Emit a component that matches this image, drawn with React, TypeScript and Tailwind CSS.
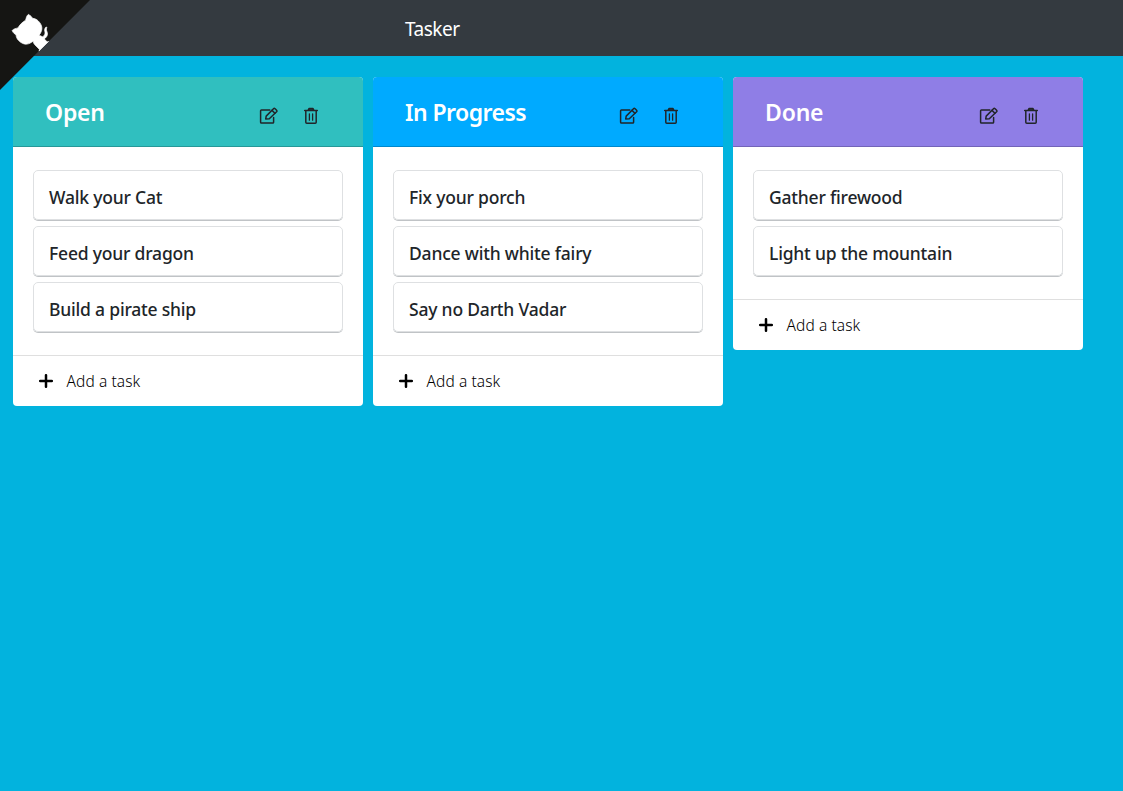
import React from "react";

type Column = { title: string; color: string; tracking: string; tasks: string[] };

const columns: Column[] = [
  { title: "Open", color: "bg-[#30bfbf]", tracking: "tracking-[-0.2px]", tasks: ["Walk your Cat", "Feed your dragon", "Build a pirate ship"] },
  { title: "In Progress", color: "bg-[#00aaff]", tracking: "tracking-[-0.55px]", tasks: ["Fix your porch", "Dance with white fairy", "Say no Darth Vadar"] },
  { title: "Done", color: "bg-[#8f7ee6]", tracking: "tracking-[-0.2px]", tasks: ["Gather firewood", "Light up the mountain"] },
];

function EditIcon() {
  return (
    <svg width="20" height="18" viewBox="0 0 20 18" fill="none" stroke="#212529" strokeWidth="1.5" strokeLinejoin="round" strokeLinecap="round">
      <path d="M10.8 3H2.4Q1.6 3 1.6 3.8V15.2Q1.6 16 2.4 16H13.8Q14.6 16 14.6 15.2V10.4" />
      <path d="M6.7 12L7.2 9.1L14.5 1.8Q15.3 1 16.1 1.8L17.6 3.3Q18.3 4.1 17.6 4.8L10.3 11.7L6.7 12Z" />
      <path d="M13 3.4L15.9 6.3" />
    </svg>
  );
}

function TrashIcon() {
  return (
    <svg width="16" height="18" viewBox="0 0 16 18" fill="none" stroke="#212529" strokeWidth="1.5" strokeLinejoin="round" strokeLinecap="round">
      <path d="M1.7 3.6H14.3M2.8 4V15.2Q2.8 16.2 3.8 16.2H12.2Q13.2 16.2 13.2 15.2V4" />
      <path d="M5.2 3.3L6 1.6H10L10.8 3.3Z" fill="#212529" fillOpacity="0.5" />
      <path d="M6.4 6.8V13.2M9.6 6.8V13.2" strokeWidth="1.3" />
    </svg>
  );
}

function GithubCorner() {
  return (
    <svg className="absolute left-0 top-0 -scale-x-100" width="90" height="90" viewBox="0 0 250 250">
      <path fill="#151513" d="M0,0 L115,115 L130,115 L142,142 L250,250 L250,0 Z" />
      <g fill="#fff" stroke="#fff" strokeWidth="2" strokeLinejoin="round">
        <path d="M128.3,109.0 C113.8,99.7 119.0,89.6 119.0,89.6 C122.0,82.7 120.5,78.6 120.5,78.6 C119.2,72.0 123.4,76.3 123.4,76.3 C127.3,80.9 125.5,87.3 125.5,87.3 C122.9,97.6 130.6,101.9 134.4,103.2" />
        <path d="M115.0,115.0 C114.9,115.1 118.7,116.5 119.8,115.4 L133.7,101.6 C136.9,99.2 139.9,98.4 142.2,98.6 C133.8,88.0 127.5,74.4 143.8,58.0 C148.5,53.4 154.0,51.2 159.7,51.0 C160.3,49.4 163.2,43.6 171.4,40.1 C171.4,40.1 176.1,42.5 178.8,56.2 C183.1,58.6 187.2,61.8 190.9,65.4 C194.5,69.0 197.7,73.2 200.1,77.6 C213.8,80.2 216.3,84.9 216.3,84.9 C212.7,93.1 206.9,96.0 205.4,96.6 C205.1,102.4 203.0,107.8 198.3,112.5 C181.9,128.9 168.3,122.5 157.7,114.1 C157.9,116.9 156.7,120.9 152.7,124.9 L141.0,136.5 C139.8,137.7 141.6,141.9 141.8,141.8 Z" />
      </g>
    </svg>
  );
}

function BoardColumn({ title, color, tracking, tasks }: Column) {
  return (
    <section className="w-[350px] overflow-hidden rounded bg-white">
      <header className={`flex h-[70px] items-center border-b border-black/20 pl-8 pr-11 ${color}`}>
        <h2 className={`flex-1 whitespace-nowrap text-[23px] font-semibold leading-8 text-white ${tracking}`}><span>{title}</span></h2>
        <button aria-label="Edit" className="mr-[24px] mt-[8px]"><EditIcon /></button>
        <button aria-label="Delete" className="mt-[8px]"><TrashIcon /></button>
      </header>
      <ul className="flex flex-col gap-[6px] px-5 pb-[23px] pt-[23px]">
        {tasks.map((task) => (
          <li key={task} className="flex h-[50px] items-center rounded-[5px] border border-[#dee0e2] pl-[15px] pt-[4px] text-[17.5px] font-medium tracking-[-0.2px] text-[#212529] shadow-[0_1px_0_#c0c3c6]">
            <span>{task}</span>
          </li>
        ))}
      </ul>
      <button className="flex h-[51px] w-full items-center gap-[13.5px] border-t border-[#dfdfdf] pl-[26px] text-[15.5px] tracking-[0.1px] text-black">
        <svg width="14" height="14" viewBox="0 0 14 14"><path d="M7 1.2V12.8M1.2 7H12.8" stroke="#000" strokeWidth="2.5" strokeLinecap="round" /></svg>
        <span className="pt-[2px] font-[350]">Add a task</span>
      </button>
    </section>
  );
}

export default function App() {
  return (
    <div className="relative h-[791px] overflow-hidden bg-[#02b3de] font-['Noto_Sans','Open_Sans',sans-serif]">
      <nav className="flex h-14 items-center bg-[#343a40] pl-[405px] pt-[2px] text-[19px] tracking-[-0.5px] text-white"><span>Tasker</span></nav>
      <main className="flex items-start gap-[10px] pl-[13px] pt-[21px]">
        {columns.map((column) => <BoardColumn key={column.title} {...column} />)}
      </main>
      <GithubCorner />
    </div>
  );
}
